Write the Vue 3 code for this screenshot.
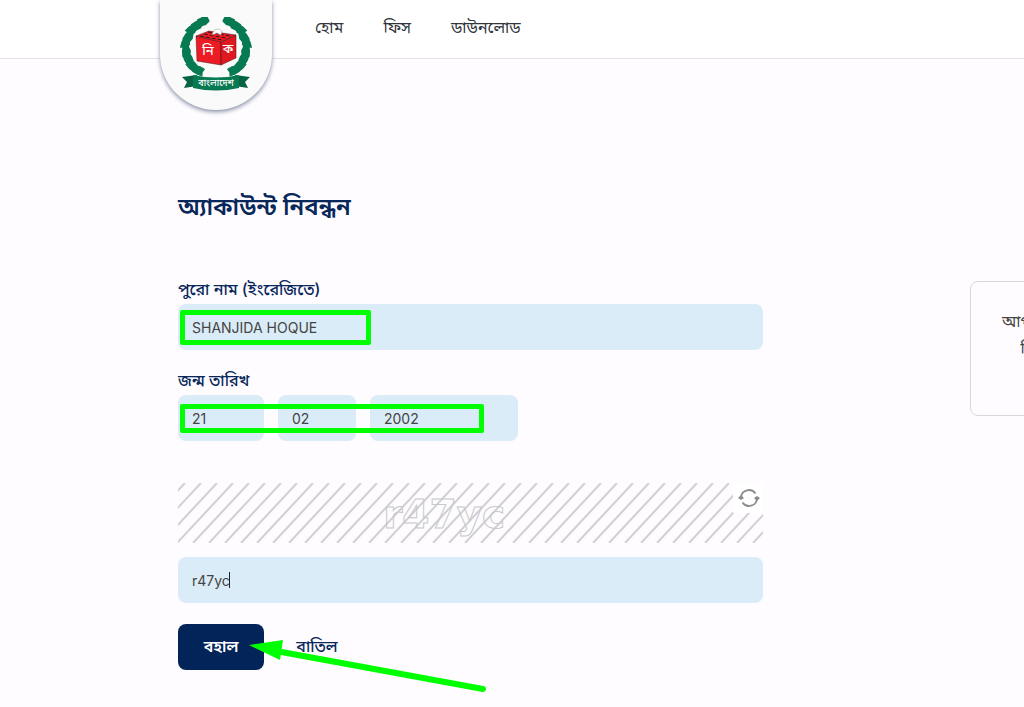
<template>
  <div class="page">
    <header class="site-header">
      <a href="#" class="logo" aria-label="নিক বাংলাদেশ">
        <svg class="emblem" viewBox="0 0 72 76">
          <!-- Wreath -->
          <g fill="#087a52">
            <g v-for="(leaf, i) in leaves" :key="i">
              <path :transform="`translate(${leaf.x} ${leaf.y}) rotate(${leaf.r})`" d="M-5-4L1-4L6-3L6 3L1 5L-5 4L-4 0Z" />
              <path :transform="`translate(${72 - leaf.x} ${leaf.y}) scale(-1 1) rotate(${leaf.r})`" d="M-5-4L1-4L6-3L6 3L1 5L-5 4L-4 0Z" />
            </g>
          </g>
          <!-- Ballot box -->
          <path fill="#ed1c24" stroke="#3b1719" stroke-width=".5" d="M16 19L41 25V48L17 44Z" />
          <path fill="#df1920" stroke="#3b1719" stroke-width=".5" d="M41 25L56 18V41L41 48Z" />
          <path fill="#ed1c24" stroke="#3b1719" stroke-width=".5" d="M16 19L29 14L56 18L41 25Z" />
          <path fill="none" stroke="#3b1719" stroke-width="1" stroke-dasharray="4 2" d="M20 19L42 23M24 17L46 21M28 15L50 19" />
          <path fill="#fff" stroke="#999" stroke-width=".5" d="M32 18L34 13L39 12L42 14L41 18L37 16Z" />
          <text x="28" y="38" class="box-text">নি</text>
          <text x="48" y="36" class="box-text">ক</text>
          <!-- Ribbon -->
          <path fill="#076442" d="M2 60L17 58V69L4 71L7 65ZM70 60L55 58V69L68 71L65 65Z" />
          <path fill="#087a52" d="M13 58Q36 63 59 58V71Q36 76 13 71Z" />
          <text x="36" y="69" class="ribbon-text">বাংলাদেশ</text>
        </svg>
      </a>
      <nav class="nav">
        <a v-for="item in navItems" :key="item" href="#">{{ item }}</a>
      </nav>
    </header>

    <main class="main">
      <h1>অ্যাকাউন্ট নিবন্ধন</h1>

      <div class="columns">
        <form @submit.prevent>
          <!-- Full name -->
          <div class="field">
            <label for="name">পুরো নাম (ইংরেজিতে)</label>
            <input id="name" v-model="form.name" type="text" class="form-input" />
            <span class="mark mark-name"></span>
          </div>

          <!-- Date of birth -->
          <div class="field">
            <label for="day">জন্ম তারিখ</label>
            <div class="date-row">
              <input id="day" v-model="form.day" type="text" class="form-input" />
              <input v-model="form.month" type="text" class="form-input" aria-label="মাস" />
              <input v-model="form.year" type="text" class="form-input" aria-label="বছর" />
            </div>
            <span class="mark mark-date"></span>
          </div>

          <!-- Captcha -->
          <div class="captcha">
            <svg class="captcha-image" height="60">
              <line v-for="n in 130" :key="n" :x1="stripeX(n)" y1="60" :x2="stripeX(n) + 56" y2="0" />
              <text x="45.5%" y="45">r47yc</text>
            </svg>
            <button type="button" class="refresh" aria-label="রিফ্রেশ">
              <svg viewBox="0 0 24 24" width="24" height="24">
                <path d="M5 11A8 8 0 0 1 19.500 7.500M21 13A8 8 0 0 1 6.500 16.500" fill="none" stroke="#8b8b8b" stroke-width="1.800" />
                <path d="M2 12L5 9L8 12L5 14ZM18 12L21 10L24 12L21 15Z" fill="#8b8b8b" />
              </svg>
            </button>
          </div>
          <div class="captcha-entry">
            <input v-model="form.captcha" type="text" class="form-input" aria-label="ক্যাপচা" />
            <span class="caret"></span>
          </div>

          <div class="actions">
            <button type="submit" class="btn-submit">বহাল</button>
            <button type="button" class="btn-cancel">বাতিল</button>
            <svg class="arrow" width="312" height="72">
              <path d="M98 27L305 65" stroke="#0f0" stroke-width="6" stroke-linecap="round" />
              <path d="M71 21L105 16L102 36Z" fill="#0f0" />
            </svg>
          </div>
        </form>

        <aside class="notice">
          <p>আপনার জাতীয় পরিচয়পত্র</p>
          <p>নিবন্ধন করা আছে কি</p>
        </aside>
      </div>
    </main>
  </div>
</template>

<script setup>
import { reactive } from 'vue'

const navItems = ['হোম', 'ফিস', 'ডাউনলোড']

const form = reactive({
  name: 'SHANJIDA HOQUE',
  day: '21',
  month: '02',
  year: '2002',
  captcha: 'r47yc'
})

// Left half of the wreath, the right half is mirrored
const leaves = [
  { x: 23, y: 4, r: -25 },
  { x: 17, y: 8, r: -35 },
  { x: 11, y: 13, r: -45 },
  { x: 8, y: 20, r: -60 },
  { x: 5, y: 27, r: -75 },
  { x: 6, y: 35, r: -95 },
  { x: 8, y: 42, r: -120 },
  { x: 12, y: 49, r: -140 },
  { x: 19, y: 54, r: -160 }
]

const stripeX = (n) => n * 16 - 65
</script>

<style>
body {
  background: #fefcff;
}
</style>

<style scoped>
.page {
  min-height: 100vh;
  overflow: hidden;
  color: #08275a;
  font-family: Inter, "Noto Sans Bengali", "Noto Sans", sans-serif;
}

.site-header {
  display: flex;
  height: 58px;
  padding-left: 160px;
  gap: 43px;
  background: #fff;
  border-bottom: 1px solid #e2e2e5;
}

.logo {
  display: flex;
  flex: none;
  justify-content: center;
  align-items: flex-start;
  width: 112px;
  height: 110px;
  padding-top: 17px;
  box-sizing: border-box;
  background: #fafafb;
  border-radius: 0 0 56px 56px;
  box-shadow: 0 2px 4px #8b93a8;
  z-index: 1;
}

.emblem {
  width: 72px;
  height: 76px;
}

.emblem text {
  fill: #fff;
  font-weight: 500;
  text-anchor: middle;
}

.box-text {
  font-size: 13px;
}

.ribbon-text {
  font-size: 9px;
}

.nav {
  display: flex;
  align-items: center;
  gap: 40px;
  height: 56px;
}

.nav a {
  color: #30343b;
  font-size: 16px;
  text-decoration: none;
}

.main {
  padding: 128px 0 36px 178px;
}

h1 {
  margin: 0 0 51px;
  font-size: 24px;
  line-height: 40px;
  font-weight: 600;
}

.columns {
  display: grid;
  grid-template-columns: minmax(0, 1fr) 236px;
  gap: 207px;
  align-items: start;
  margin-right: -182px;
}

.field {
  position: relative;
  margin-bottom: 19px;
}

label {
  display: block;
  height: 26px;
  font-size: 16px;
  line-height: 22px;
  font-weight: 500;
}

.form-input {
  display: block;
  width: 100%;
  height: 46px;
  padding: 0 14px;
  box-sizing: border-box;
  border: 0;
  border-radius: 8px;
  background: #daecf7;
  color: #444;
  font-family: Inter, sans-serif;
  font-size: 14px;
}

.date-row {
  display: grid;
  grid-template-columns: 86px 78px 148px;
  gap: 14px;
}

.mark {
  position: absolute;
  box-sizing: border-box;
  border: 5px solid #0f0;
  border-radius: 2px;
  pointer-events: none;
}

.mark-name {
  left: 2px;
  top: 32px;
  width: 191px;
  height: 35px;
}

.mark-date {
  left: 2px;
  top: 35px;
  width: 304px;
  height: 29px;
}

.captcha {
  position: relative;
  margin-top: 42px;
  margin-bottom: 14px;
}

.captcha-image {
  display: block;
  width: 100%;
}

.captcha-image line {
  stroke: #d0d0d2;
  stroke-width: 2;
}

.captcha-image text {
  fill: none;
  stroke: #c8c8cb;
  font: 700 39px "DejaVu Sans", sans-serif;
  text-anchor: middle;
}

.refresh {
  position: absolute;
  top: 0;
  right: 0;
  width: 30px;
  height: 30px;
  padding: 3px;
  border: 0;
  background: #fff;
}

.refresh svg {
  display: block;
}

.captcha-entry {
  position: relative;
  margin-bottom: 21px;
}

.caret {
  position: absolute;
  left: 51px;
  top: 15px;
  width: 1px;
  height: 16px;
  background: #222;
}

.actions {
  position: relative;
  display: flex;
  gap: 14px;
}

.actions button {
  height: 46px;
  padding: 0;
  border: 0;
  border-radius: 8px;
  font-family: inherit;
  font-size: 16px;
  font-weight: 600;
}

.btn-submit {
  width: 86px;
  background: #032459;
  color: #fff;
}

.actions .btn-cancel {
  width: 78px;
  background: none;
  color: #08275a;
  font-weight: 500;
}

.arrow {
  position: absolute;
  left: 0;
  top: 0;
  pointer-events: none;
}

.notice {
  height: 135px;
  margin-top: 3px;
  padding: 26px 0;
  box-sizing: border-box;
  border: 1px solid #d8d8dc;
  border-radius: 8px;
  color: #444;
  font-size: 16px;
  line-height: 27px;
  text-align: center;
}

.notice p {
  margin: 0;
  white-space: nowrap;
}
</style>
